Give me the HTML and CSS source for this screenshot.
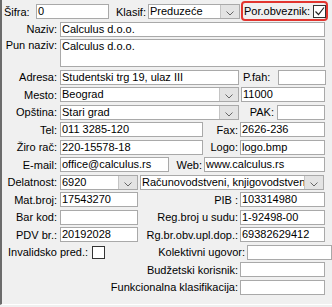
FILE: index.html
```html
<!DOCTYPE html>
<html lang="sr">
<head>
<meta charset="UTF-8"/>
<title>Firma</title>
<link rel="stylesheet" href="styles.css">
</head>
<body>
<div class="form">

  <div class="row">
    <span class="lbl-sifra">Šifra:</span>
    <span class="in w73">0</span>
    <span class="lbl-klasif">Klasif:</span>
    <span class="combo w92"><span class="val">Preduzeće</span><span class="btn"><svg width="8" height="5" viewBox="0 0 8 5"><polyline points="0.5,0.5 4,4 7.5,0.5" fill="none" stroke="#666" stroke-width="1"/></svg></span></span>
    <span class="mark">Por.obveznik:<span class="chk on"><svg width="11" height="11" viewBox="0 0 11 11"><polyline points="1.5,5.5 4.5,8.5 10,1.5" fill="none" stroke="#222" stroke-width="1.2"/></svg></span></span>
  </div>

  <div class="row">
    <span class="l">Naziv:</span>
    <span class="in w265">Calculus d.o.o.</span>
  </div>

  <div class="row tall">
    <span class="l">Pun naziv:</span>
    <span class="in area w265">Calculus d.o.o.</span>
  </div>

  <div class="row">
    <span class="l">Adresa:</span>
    <span class="in w179">Studentski trg 19, ulaz III</span>
    <span class="lbl-mid">P.fah:</span>
    <span class="in w48"></span>
  </div>

  <div class="row">
    <span class="l">Mesto:</span>
    <span class="combo w179"><span class="val">Beograd</span><span class="btn"><svg width="8" height="5" viewBox="0 0 8 5"><polyline points="0.5,0.5 4,4 7.5,0.5" fill="none" stroke="#666" stroke-width="1"/></svg></span></span>
    <span class="in w84 ml2">11000</span>
  </div>

  <div class="row">
    <span class="l">Opština:</span>
    <span class="combo w179"><span class="val">Stari grad</span><span class="btn"><svg width="8" height="5" viewBox="0 0 8 5"><polyline points="0.5,0.5 4,4 7.5,0.5" fill="none" stroke="#666" stroke-width="1"/></svg></span></span>
    <span class="r pak">PAK:</span>
    <span class="in w48"></span>
  </div>

  <div class="row">
    <span class="l">Tel:</span>
    <span class="in w143">011 3285-120</span>
    <span class="r w37">Fax:</span>
    <span class="in w85">2626-236</span>
  </div>

  <div class="row">
    <span class="l">Žiro rač:</span>
    <span class="in w143">220-15578-18</span>
    <span class="r w37">Logo:</span>
    <span class="in w85">logo.bmp</span>
  </div>

  <div class="row">
    <span class="l">E-mail:</span>
    <span class="in w109">office@calculus.rs</span>
    <span class="r w35">Web:</span>
    <span class="in w121">www.calculus.rs</span>
  </div>

  <div class="row">
    <span class="l">Delatnost:</span>
    <span class="combo w78"><span class="val">6920</span><span class="btn"><svg width="8" height="5" viewBox="0 0 8 5"><polyline points="0.5,0.5 4,4 7.5,0.5" fill="none" stroke="#666" stroke-width="1"/></svg></span></span>
    <span class="combo w184 ml2"><span class="val">Računovodstveni, knjigovodstveni i revizorski poslovi</span><span class="btn"><svg width="8" height="5" viewBox="0 0 8 5"><polyline points="0.5,0.5 4,4 7.5,0.5" fill="none" stroke="#666" stroke-width="1"/></svg></span></span>
  </div>

  <div class="row">
    <span class="l">Mat.broj:</span>
    <span class="in w78">17543270</span>
    <span class="r w102">PIB :</span>
    <span class="in w85">103314980</span>
  </div>

  <div class="row">
    <span class="l">Bar kod:</span>
    <span class="in w78"></span>
    <span class="r w102">Reg.broj u sudu:</span>
    <span class="in w85">1-92498-00</span>
  </div>

  <div class="row">
    <span class="l">PDV br.:</span>
    <span class="in w78">20192028</span>
    <span class="r w102">Rg.br.obv.upl.dop.:</span>
    <span class="in w85">69382629412</span>
  </div>

  <div class="row">
    <span class="inval">Invalidsko pred.:</span>
    <span class="chk"></span>
    <span class="r grow">Kolektivni ugovor:</span>
    <span class="in w85"></span>
  </div>

  <div class="row">
    <span class="r wide">Budžetski korisnik:</span>
    <span class="in w85"></span>
  </div>

  <div class="row">
    <span class="r wide">Funkcionalna klasifikacija:</span>
    <span class="in w85"></span>
  </div>

</div>
</body>
</html>
```

FILE: styles.css
```css
html, body { margin:0; padding:0; background:#f0f0f0; }
body {
  font-family: "Liberation Sans", Arial, sans-serif;
  font-size: 11px; color:#000;
}
.form {
  box-sizing: border-box;
  width: 332px; height: 305px;
  border-left: 2px solid #6b6b6b;
  border-bottom: 1px solid #fff;
  padding-top: 4px;
  display: flex; flex-direction: column; gap: 2.5px;
}
.row {
  display: flex; align-items: center;
  height: 15px; white-space: nowrap;
}
.row.tall { height: 28px; align-items: flex-start; }

.l { width:55px; margin-right:3px; text-align:right; flex:none; }
.r { text-align:right; padding-right:2px; box-sizing:border-box; flex:none; }
.w37 { width:37px; }
.w35 { width:35px; }
.w102 { width:102px; }
.grow { flex:1; }
.wide { width:238px; }
.pak { width:38px; padding-right:3px; }
.lbl-sifra { width:32px; padding-left:2px; flex:none; }
.lbl-klasif { width:32px; margin-left:7px; flex:none; }
.lbl-mid { width:39px; padding-left:4px; box-sizing:border-box; flex:none; }
.inval { padding-left:6px; margin-right:4px; }

.in {
  box-sizing: border-box; height: 15px; flex: none;
  border: 1px solid #a9a9a9; background:#fff;
  padding-left: 1px; line-height: 13px;
  overflow: hidden;
}
.in.area { height: 28px; }
.ml2 { margin-left:2px; }
.w73 { width:73px; }
.w265 { width:265px; }
.w179 { width:179px; }
.w48 { width:48px; }
.w84 { width:84px; }
.w143 { width:143px; }
.w85 { width:85px; }
.w109 { width:109px; }
.w121 { width:121px; }
.w78 { width:78px; }
.w92 { width:92px; }
.w184 { width:184px; }

.combo {
  box-sizing: border-box; height: 15px; flex: none;
  border: 1px solid #a9a9a9; background:#fff;
  display: flex; overflow: hidden;
}
.combo .val {
  flex: 1; overflow: hidden; padding-left: 1px; line-height: 13px;
}
.combo .btn {
  width: 19px; flex: none;
  background: #e3e3e3; border-left: 1px solid #c4c4c4;
  display: flex; align-items: flex-end; justify-content: center;
  padding-bottom: 2px; box-sizing: border-box;
}

.mark {
  box-sizing: border-box; flex: none;
  width: 87px; height: 20px; margin: -3px 0 -2px 1px;
  border: 2px solid #e2352f; border-radius: 4px;
  display: flex; align-items: center; padding-left: 1px;
}
.chk {
  box-sizing: border-box; width: 13px; height: 13px; flex: none;
  border: 1px solid #333; background: #fff;
  display: flex; align-items: center; justify-content: center;
}
.mark .chk { margin-left: 3px; }
```
